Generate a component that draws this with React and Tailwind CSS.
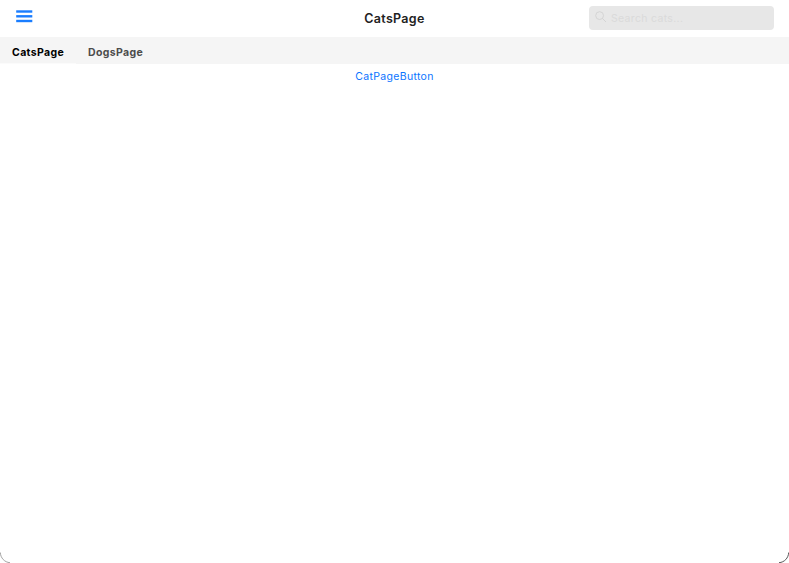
import React from "react";

function MenuIcon() {
  return (
    <svg width="17" height="13" viewBox="0 0 17 13" fill="#1a7dff">
      <rect x="0.2" y="0.3" width="16.1" height="2.4" />
      <rect x="0.2" y="5.1" width="16.1" height="2.4" />
      <rect x="0.2" y="9.8" width="16.1" height="2.4" />
    </svg>
  );
}

function SearchField() {
  return (
    <label className="flex h-[23.5px] w-[185px] items-center rounded-[4px] bg-[#e7e7e7] pl-[6px]">
      <svg className="-mt-px shrink-0" width="12" height="12" viewBox="0 0 12 12" fill="none" stroke="#d4d4d4" strokeWidth="1">
        <circle cx="4.6" cy="4.6" r="3.9" />
        <path d="M7.4 7.4 L10.7 10.7" strokeLinecap="round" />
      </svg>
      <span className="ml-[4px] mt-[3px] text-[10.5px] leading-[16px] tracking-[0.32px] text-[#dadada]">Search cats...</span>
    </label>
  );
}

// Thin outline along the rounded bottom corner of the window.
function Corner({ right = false }) {
  return (
    <svg width="11" height="11" viewBox="0 0 11 11" fill="none" className={right ? "-scale-x-100" : ""}>
      <path d="M0.3 0.5 C0.6 6 4.5 10.3 10 10.7" stroke={right ? "#444" : "#999"} strokeWidth="0.9" />
    </svg>
  );
}

export default function App() {
  return (
    <div className="flex h-[563px] w-[789px] flex-col overflow-hidden bg-white font-['Inter',sans-serif]">
      <header className="grid h-[37px] grid-cols-3 items-start">
        <button className="ml-4 mt-[10px] w-[17px]" aria-label="Menu">
          <MenuIcon />
        </button>
        <h1 className="mt-[10px] text-center text-[12.5px] font-semibold leading-[18px] tracking-[0.3px] text-[#222]">CatsPage</h1>
        <div className="mr-[15px] mt-[6px] flex justify-end">
          <SearchField />
        </div>
      </header>
      <nav className="flex h-[27px] items-start bg-[#f5f5f5] text-[10.5px] font-bold leading-[16px]">
        <div className="h-[27px] w-[76px] border-b border-[#fbfbfb] pl-3 pt-[8px] tracking-[0.38px] text-black">CatsPage</div>
        <div className="pl-3 pt-[8px] tracking-[0.38px] text-[#4c4c4c]">DogsPage</div>
      </nav>
      <main className="flex flex-1 flex-col items-center justify-between">
        <button className="mt-[5px] text-[10.5px] leading-[16px] tracking-[0.32px] text-[#0a74ff]">CatPageButton</button>
        <div className="flex w-full justify-between">
          <Corner />
          <Corner right />
        </div>
      </main>
    </div>
  );
}
